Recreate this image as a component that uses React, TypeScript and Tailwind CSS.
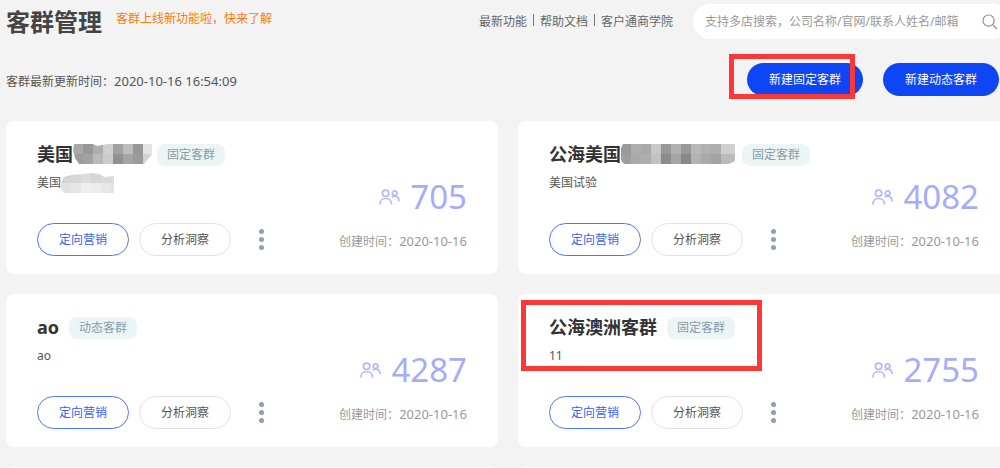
import { useId } from "react";

type Mosaic = {
  cells: string[][];
  outline: string;
  width: number;
};

type Group = {
  name: string;
  nameMask?: Mosaic;
  type: string;
  desc: string;
  descMask?: Mosaic;
  count: number;
  created: string;
  highlighted?: boolean;
};

const groups: Group[] = [
  {
    name: "美国",
    nameMask: {
      width: 79,
      outline: "M1 0H20L24 2L34 0H79V10L76 14L71 20H6L2 14L0 6Z",
      cells: [
        ["#a9a9a9", "#989898", "#aeaeae", "#d0d0d0", "#a1a1a1", "#bdbdbd", "#989898", "#e3e3e3"],
        ["#9c9c9c", "#a2a2a2", "#bababa", "#cccccc", "#919191", "#a4a4a4", "#9b9b9b", "#d2d2d2"],
      ],
    },
    type: "固定客群",
    desc: "美国",
    descMask: {
      width: 53,
      outline: "M0 10L3 4L10 2L22 1L30 0L38 1L44 4L53 3V20H3L0 16Z",
      cells: [
        ["#d3d3d3", "#d7d7d7", "#dcdcdc", "#d6d6d6", "#dadada", "#dddddd"],
        ["#e1e1e1", "#e6e6e6", "#efefef", "#ededed", "#e7e7e7", "#e3e3e3"],
      ],
    },
    count: 705,
    created: "2020-10-16",
  },
  {
    name: "公海美国",
    nameMask: {
      width: 116,
      outline: "M2 0H114V17L108 20H3L0 16V4Z",
      cells: [
        ["#999999", "#adadad", "#a9a9a9", "#c8c8c8", "#999999", "#b1b1b1", "#999999", "#b8b8b8", "#b1b1b1", "#aeaeae", "#cfcfcf", "#cfcfcf"],
        ["#9e9e9e", "#a9a9a9", "#adadad", "#c2c2c2", "#8c8c8c", "#a6a6a6", "#888888", "#b3b3b3", "#a9a9a9", "#a3a3a3", "#bbbbbb", "#bbbbbb"],
      ],
    },
    type: "固定客群",
    desc: "美国试验",
    count: 4082,
    created: "2020-10-16",
  },
  {
    name: "ao",
    type: "动态客群",
    desc: "ao",
    count: 4287,
    created: "2020-10-16",
  },
  {
    name: "公海澳洲客群",
    type: "固定客群",
    desc: "11",
    count: 2755,
    created: "2020-10-16",
    highlighted: true,
  },
];

const navLinks = ["最新功能", "帮助文档", "客户通商学院"];

function MosaicMask({ cells, outline, width }: Mosaic) {
  const id = useId();
  return (
    <svg width={width} height="20" viewBox={`0 0 ${width} 20`} className="shrink-0" aria-hidden="true">
      <clipPath id={id}>
        <path d={outline} />
      </clipPath>
      <g clipPath={`url(#${id})`}>
        {cells.map((row, y) =>
          row.map((fill, x) => (
            <rect key={`${x}-${y}`} x={x * 10} y={y * 10} width="10" height="10" fill={fill} />
          ))
        )}
      </g>
    </svg>
  );
}

function PeopleIcon() {
  return (
    <svg width="21" height="16" viewBox="0 0 21 16" fill="none" stroke="#b3b9fb" strokeWidth="1.7" aria-hidden="true">
      <circle cx="6.6" cy="4.3" r="3.2" />
      <path d="M1 15.5V14.5C1 11.5 3.5 9.5 6.7 9.5s5.7 2 5.7 5V15.5" />
      <circle cx="15.6" cy="4.2" r="2.3" />
      <path d="M13 8.4c.7-.8 1.5-1.2 2.6-1.2 2.6 0 4.4 2 4.4 5" />
    </svg>
  );
}

function SearchIcon() {
  return (
    <svg width="16" height="16" viewBox="0 0 16 16" fill="none" stroke="#8f8f8f" strokeWidth="1.2" aria-hidden="true">
      <circle cx="6.6" cy="6.6" r="5.6" />
      <path d="M10.7 10.7L15 15" />
    </svg>
  );
}

function GroupCard({ group }: { group: Group }) {
  return (
    <article className="relative flex justify-between rounded-lg bg-white pt-5 pr-[31px] pb-[18px] pl-[31px]">
      <div>
        <div className="flex h-[26px] items-center">
          <h2 className="text-lg leading-[26px] font-bold text-[#333]">{group.name}</h2>
          {group.nameMask && <MosaicMask {...group.nameMask} />}
          <span
            className={`${group.nameMask ? "ml-[5px]" : "ml-2.5"} mt-0.5 rounded-lg bg-[#ecf5f5] px-2.5 text-xs leading-[22px] text-[#8a9ba8]`}
          >
            {group.type}
          </span>
        </div>
        <div className="mt-1.5 flex h-5 items-center text-xs text-[#555]">
          <p>{group.desc}</p>
          {group.descMask && <MosaicMask {...group.descMask} />}
        </div>
        <div className="mt-[30px] flex items-center gap-2.5">
          <button type="button" className="h-[33px] w-[92px] rounded-full border border-[#4a76fd] text-xs text-[#3562f7]">
            定向营销
          </button>
          <button type="button" className="h-[33px] w-[92px] rounded-full border border-[#e3e3e3] text-xs text-[#555]">
            分析洞察
          </button>
          <button type="button" aria-label="更多" className="flex w-10 flex-col items-center gap-[3px]">
            <span className="size-[5px] rounded-full bg-[#8e9fb5]" />
            <span className="size-[5px] rounded-full bg-[#8e9fb5]" />
            <span className="size-[5px] rounded-full bg-[#8e9fb5]" />
          </button>
        </div>
      </div>

      <div className="flex flex-col items-end justify-end">
        <div className="flex items-center gap-2.5">
          <PeopleIcon />
          <span className="text-[33px] leading-10 text-[#a5adfb]">{group.count}</span>
        </div>
        <p className="mt-3.5 mb-1 flex items-baseline text-xs leading-5 text-[#999]">
          创建时间：
          <time className="text-[13px] leading-5">{group.created}</time>
        </p>
      </div>

      {group.highlighted && (
        <div className="pointer-events-none absolute top-1.5 left-[3px] h-[71px] w-[241px] border-5 border-[#fb3838]" />
      )}
    </article>
  );
}

export default function App() {
  return (
    <main className="h-screen overflow-hidden bg-[#f3f3f3] pl-1.5 font-['Noto_Sans','Noto_Sans_CJK_SC',sans-serif] text-[#333]">
      <header className="-mr-2.5 flex items-center justify-between pt-1">
        <div className="flex items-center">
          <h1 className="text-2xl leading-[35px] font-bold text-[#444]">客群管理</h1>
          <a href="#news" className="mb-1.5 ml-3.5 text-xs text-[#ff7a0e]">
            客群上线新功能啦，快来了解
          </a>
        </div>
        <div className="flex items-center">
          <nav className="mr-5 flex items-center text-xs text-[#666]">
            {navLinks.map((label, i) => (
              <span key={label} className="flex items-center">
                {i > 0 && <span className="mx-1.5 mb-1 h-3 w-px bg-[#777]" />}
                <a href="#help">{label}</a>
              </span>
            ))}
          </nav>
          <label className="flex h-[35px] w-[317px] items-center rounded-full bg-white px-3">
            <input
              type="search"
              aria-label="搜索"
              placeholder="支持多店搜索，公司名称/官网/联系人姓名/邮箱"
              className="min-w-0 flex-1 text-xs outline-none placeholder:text-[#999]"
            />
            <SearchIcon />
          </label>
        </div>
      </header>

      <section className="mt-6 flex items-center justify-between pr-px">
        <p className="flex items-baseline pt-1 text-xs leading-5 text-[#555]">
          客群最新更新时间：
          <time className="text-[13px] leading-5">2020-10-16 16:54:09</time>
        </p>
        <div className="flex gap-5">
          <div className="relative">
            <button type="button" className="h-[33px] w-[116px] rounded-full bg-[#0e46f5] text-xs text-white">
              新建固定客群
            </button>
            <div className="pointer-events-none absolute -top-[9px] -left-[18px] h-[45px] w-[126px] border-5 border-[#fb3838]" />
          </div>
          <button type="button" className="h-[33px] w-[116px] rounded-full bg-[#0e46f5] text-xs text-white">
            新建动态客群
          </button>
        </div>
      </section>

      <section className="mt-[25px] -mr-2.5 grid grid-cols-2 gap-5">
        {groups.map((group) => (
          <GroupCard key={group.name} group={group} />
        ))}
        <div className="h-10 rounded-lg bg-white" />
        <div className="h-10 rounded-lg bg-white" />
      </section>
    </main>
  );
}
